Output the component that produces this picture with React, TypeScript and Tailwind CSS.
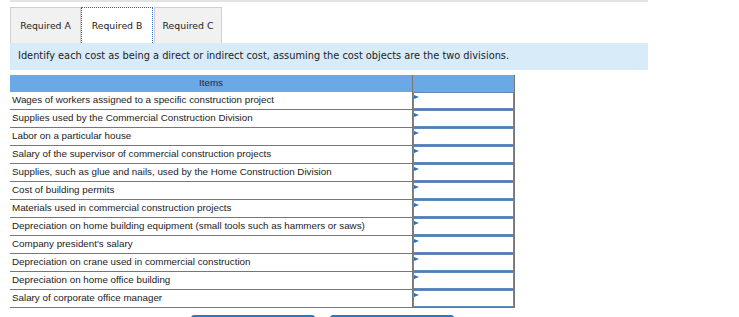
import React from 'react';

const items = [
  'Wages of workers assigned to a specific construction project',
  'Supplies used by the Commercial Construction Division',
  'Labor on a particular house',
  'Salary of the supervisor of commercial construction projects',
  'Supplies, such as glue and nails, used by the Home Construction Division',
  'Cost of building permits',
  'Materials used in commercial construction projects',
  'Depreciation on home building equipment (small tools such as hammers or saws)',
  "Company president's salary",
  'Depreciation on crane used in commercial construction',
  'Depreciation on home office building',
  'Salary of corporate office manager',
];

const tabs = ['Required A', 'Required B', 'Required C'];

export default function App() {
  return (
    <div className="w-[739px] h-[317px] bg-white overflow-hidden">
      <div className="ml-[10px] w-[638px]">
        <div className="h-[2px] bg-[#e3e3e3]" />

        {/* Tabs */}
        <div className="flex mt-[5px] h-[36px] font-['DejaVu_Sans',sans-serif] text-[9.3px] text-[#222]">
          {tabs.map((t, i) =>
            i === 1 ? (
              <div
                key={t}
                className="w-[72px] flex items-center justify-center bg-white border border-dotted border-[#2f6db5] border-b-0"
              >
                {t}
              </div>
            ) : (
              <div
                key={t}
                className={`flex items-center justify-center bg-[#f1f1f1] border border-[#cfcfcf] border-b-0 ${
                  i === 0 ? 'w-[71px]' : 'w-[68px] ml-[1px]'
                }`}
              >
                {t}
              </div>
            )
          )}
        </div>

        {/* Instruction bar */}
        <div className="h-[27px] bg-[#d8ebf9] flex items-center pl-[8px] font-['DejaVu_Sans',sans-serif] text-[9.8px] text-[#222]">
          Identify each cost as being a direct or indirect cost, assuming the cost objects are the two divisions.
        </div>

        {/* Table */}
        <div className="mt-[5px] w-[505px] font-['Liberation_Sans',Arial,sans-serif] text-[9.8px] text-[#222]">
          <div className="flex h-[17px] bg-[#6aa9e6]">
            <div className="w-[403px] flex items-center justify-center border-r border-[#777] text-[#1d2a3a]">Items</div>
            <div className="flex-1 border-r border-[#777]" />
          </div>
          {items.map((it) => (
            <div key={it} className="flex h-[18px] border-b border-[#777]">
              <div className="w-[403px] flex items-center pl-[2px] border-r border-[#777] whitespace-nowrap">{it}</div>
              <div className="flex-1 border-r border-[#777]">
                <div className="relative h-full border border-[#6189bd] bg-white">
                  <span className="absolute left-0 top-[2px] w-0 h-0 border-y-[2.5px] border-y-transparent border-l-[5px] border-l-[#2a72c8]" />
                </div>
              </div>
            </div>
          ))}
        </div>

        {/* Buttons (tops only visible) */}
        <div className="flex gap-[15px] ml-[181px] mt-[7px]">
          <div className="w-[124px] h-[20px] border-t-2 border-x-2 border-[#2b76c5] rounded-t-[3px]" />
          <div className="w-[124px] h-[20px] border-t-2 border-x-2 border-[#2b76c5] rounded-t-[3px]" />
        </div>
      </div>
    </div>
  );
}
